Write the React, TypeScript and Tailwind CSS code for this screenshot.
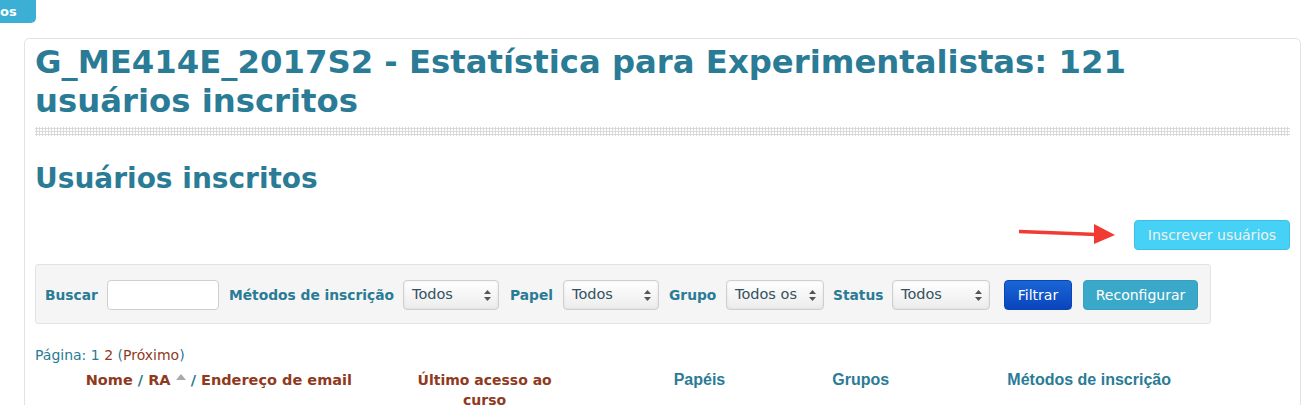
import type { ReactNode } from "react";

function FakeSelect({ label, w }: { label: string; w: string }) {
    return (
        <div className={`${w} h-[30px] flex items-center justify-between pl-[8px] pr-[7px] border border-[#cfcfcf] rounded-[4px] bg-gradient-to-b from-white to-[#ececec] shadow-[inset_0_0_3px_rgba(0,0,0,0.08)]`}>
            <span className="text-[14.5px] text-[#35525e]">{label}</span>
            <svg width="7" height="11" viewBox="0 0 7 11">
                <path d="M3.5 0 L7 4 L0 4 Z" fill="#555" />
                <path d="M3.5 11 L7 7 L0 7 Z" fill="#555" />
            </svg>
        </div>
    );
}

function Label({ children, w }: { children: ReactNode; w: string }) {
    return <span className={`${w} block shrink-0 whitespace-nowrap text-[13.8px] font-bold text-[#2a7b96]`}>{children}</span>;
}

export default function App() {
    return (
        <div className="relative w-[1306px] h-[405px] overflow-hidden bg-white font-['DejaVu_Sans',sans-serif]">
            {/* cut off tab at top-left */}
            <div className="absolute left-0 top-0 w-[36px] h-[23px] bg-[#3bafd4] rounded-br-[5px] flex items-center pl-[0px]">
                <span className="text-white text-[13px] font-bold leading-none">os</span>
            </div>

            <div className="pt-[38px] pl-[24px] pr-[5px]">
                <div className="border border-[#e3e3e3] rounded-[5px] h-[400px] pl-[10px] pr-[10px]">
                    <h1 className="max-w-[1160px] text-[32.3px] leading-[39px] font-bold text-[#2a7b96] pt-[4px]">
                        G_ME414E_2017S2 - Estatística para Experimentalistas: 121 usuários inscritos
                    </h1>
                    <div className="mt-[6px] h-[9px] bg-[radial-gradient(circle,#dadada_1px,transparent_1.2px)] bg-[length:3px_3px]" />

                    <h2 className="mt-[26px] text-[28px] leading-[34px] font-bold text-[#2a7b96]">Usuários inscritos</h2>

                    <div className="mt-[24px] flex items-center justify-end">
                        <svg width="100" height="24" viewBox="0 0 100 24" className="mr-[15px]">
                            <path d="M0 8.5 L78 11.5" stroke="#f03a33" strokeWidth="3.4" />
                            <path d="M75 1 L96 12 L75 21 Z" fill="#f03a33" />
                        </svg>
                        <div className="w-[156px] h-[30px] rounded-[4px] bg-[#45d2f6] border border-[#3bc1e3] flex items-center justify-center">
                            <span className="text-[14px] text-[#f0f0f0]">Inscrever usuários</span>
                        </div>
                    </div>

                    <div className="mt-[14px] w-[1176px] h-[60px] bg-[#f5f5f5] border border-[#e3e3e3] rounded-[3px] flex items-center pl-[9px] pt-[2px]">
                        <Label w="w-[53px]">Buscar</Label>
                        <div className="ml-[9px] w-[112px] h-[30px] bg-white border border-[#cfcfcf] rounded-[4px]" />
                        <div className="ml-[10px]"><Label w="w-[164px]">Métodos de inscrição</Label></div>
                        <div className="ml-[10px]"><FakeSelect label="Todos" w="w-[96px]" /></div>
                        <div className="ml-[11px]"><Label w="w-[43px]">Papel</Label></div>
                        <div className="ml-[10px]"><FakeSelect label="Todos" w="w-[96px]" /></div>
                        <div className="ml-[10px]"><Label w="w-[47px]">Grupo</Label></div>
                        <div className="ml-[10px]"><FakeSelect label="Todos os" w="w-[98px]" /></div>
                        <div className="ml-[9px]"><Label w="w-[50px]">Status</Label></div>
                        <div className="ml-[9px]"><FakeSelect label="Todos" w="w-[98px]" /></div>
                        <div className="ml-[14px] w-[68px] h-[30px] rounded-[4px] bg-gradient-to-b from-[#1b66d6] to-[#0a44bd] border border-[#0a45b8] flex items-center justify-center">
                            <span className="text-[14px] text-white">Filtrar</span>
                        </div>
                        <div className="ml-[11px] w-[115px] h-[30px] rounded-[4px] bg-[#3aa9c9] border border-[#35a0bf] flex items-center justify-center">
                            <span className="text-[14px] text-white">Reconfigurar</span>
                        </div>
                    </div>

                    <div className="mt-[23px] text-[14px] text-[#2a7b96] leading-[16px]">
                        Página: 1 <span className="text-[#8f3a1e]">2</span> (<span className="text-[#8f3a1e]">Próximo</span>)
                    </div>

                    <div className="mt-[7px] flex font-bold">
                        <div className="w-[368px] text-center leading-[20px] text-[14.5px] text-[#8f3a1e]">
                            Nome <span className="text-[#2a7b96]">/</span> RA{" "}
                            <svg width="10" height="6" viewBox="0 0 10 6" className="inline-block align-[5px]">
                                <path d="M5 0 L10 6 L0 6 Z" fill="#aaa" />
                            </svg>{" "}
                            <span className="text-[#2a7b96]">/</span> Endereço de email
                        </div>
                        <div className="w-[164px] text-center leading-[20px] text-[14px] text-[#8f3a1e]">Último acesso ao curso</div>
                        <div className="w-[266px] text-center leading-[20px] text-[#2a7b96] font-['Liberation_Sans',sans-serif] text-[16px]">Papéis</div>
                        <div className="w-[56px] text-center leading-[20px] text-[#2a7b96] font-['Liberation_Sans',sans-serif] text-[16px]">Grupos</div>
                        <div className="w-[402px] text-center leading-[20px] text-[#2a7b96] font-['Liberation_Sans',sans-serif] text-[16px]">Métodos de inscrição</div>
                    </div>
                </div>
            </div>
        </div>
    );
}
